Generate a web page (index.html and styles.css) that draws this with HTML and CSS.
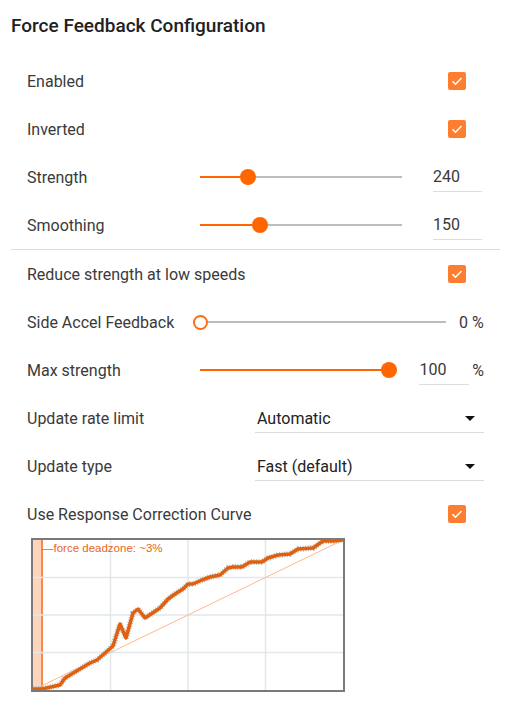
FILE: index.html
```html
<!DOCTYPE html>
<html lang="en">
<head>
  <meta charset="UTF-8" />
  <title>Force Feedback Configuration</title>
  <link rel="stylesheet" href="styles.css">
</head>
<body>
  <div class="panel">
    <h1>Force Feedback Configuration</h1>

    <div class="group">
      <div class="row">
        <span class="label">Enabled</span>
        <span class="check"><svg viewBox="0 0 18 18"><path d="M4.5 9.2l3 3 6-6.2" /></svg></span>
      </div>
      <div class="row">
        <span class="label">Inverted</span>
        <span class="check"><svg viewBox="0 0 18 18"><path d="M4.5 9.2l3 3 6-6.2" /></svg></span>
      </div>
      <div class="row">
        <span class="label fixed">Strength</span>
        <div class="slider s-strength">
          <div class="fill" style="width: 23.8%"></div>
          <div class="thumb" style="left: 23.8%"></div>
        </div>
        <span class="num n-strength">240</span>
      </div>
      <div class="row">
        <span class="label fixed">Smoothing</span>
        <div class="slider s-strength">
          <div class="fill" style="width: 29.7%"></div>
          <div class="thumb" style="left: 29.7%"></div>
        </div>
        <span class="num n-strength">150</span>
      </div>
    </div>

    <div class="group divided">
      <div class="row">
        <span class="label">Reduce strength at low speeds</span>
        <span class="check"><svg viewBox="0 0 18 18"><path d="M4.5 9.2l3 3 6-6.2" /></svg></span>
      </div>
      <div class="row">
        <span class="label fixed">Side Accel Feedback</span>
        <div class="slider s-accel">
          <div class="fill" style="width: 0%"></div>
          <div class="thumb empty" style="left: 0%"></div>
        </div>
        <span class="plain">0 %</span>
      </div>
      <div class="row">
        <span class="label fixed">Max strength</span>
        <div class="slider s-max">
          <div class="fill" style="width: 100%"></div>
          <div class="thumb" style="left: 100%"></div>
        </div>
        <span class="num n-max">100</span>
        <span class="unit">%</span>
      </div>
      <div class="row">
        <span class="label wide">Update rate limit</span>
        <div class="select">
          <span>Automatic</span>
          <span class="arrow"></span>
        </div>
      </div>
      <div class="row">
        <span class="label wide">Update type</span>
        <div class="select">
          <span>Fast (default)</span>
          <span class="arrow"></span>
        </div>
      </div>
      <div class="row">
        <span class="label">Use Response Correction Curve</span>
        <span class="check"><svg viewBox="0 0 18 18"><path d="M4.5 9.2l3 3 6-6.2" /></svg></span>
      </div>

      <!-- response curve -->
      <div class="chart">
        <svg viewBox="0 0 310 150" width="310" height="150">
          <rect x="0" y="0" width="10" height="150" fill="#fdd5bc" />
          <line x1="9" y1="0" x2="9" y2="150" stroke="#f58a4c" stroke-width="2" />
          <g stroke="#e1e7eb" stroke-width="1.5">
            <line x1="77.5" y1="0" x2="77.5" y2="150" />
            <line x1="155" y1="0" x2="155" y2="150" />
            <line x1="232.5" y1="0" x2="232.5" y2="150" />
            <line x1="0" y1="37.5" x2="310" y2="37.5" />
            <line x1="0" y1="75" x2="310" y2="75" />
            <line x1="0" y1="112.5" x2="310" y2="112.5" />
          </g>
          <line x1="0" y1="150" x2="310" y2="0" stroke="#ffb88c" stroke-width="1" />
          <text x="9" y="11.5" class="dz">—force deadzone: ~3%</text>
          <polyline class="pts" points="0,149 9,149 27,145 32,138 47,129 57,123 64,120 80,106 87,84 93,98 100,73 105,69 112,78 127,68 135,59 142,54 150,49 155,44 160,44 169,40 177,37 187,35 195,28 200,27 209,27 217,22 229,22 235,18 245,15 257,14 265,9 280,8 290,1 300,1 310,0" />
          <polyline class="curve" points="0,149 9,149 27,145 32,138 47,129 57,123 64,120 80,106 87,84 93,98 100,73 105,69 112,78 127,68 135,59 142,54 150,49 155,44 160,44 169,40 177,37 187,35 195,28 200,27 209,27 217,22 229,22 235,18 245,15 257,14 265,9 280,8 290,1 300,1 310,0" />
        </svg>
      </div>
    </div>
  </div>
</body>
</html>
```

FILE: styles.css
```css
* {
  margin: 0;
  padding: 0;
  box-sizing: border-box;
}

body {
  background: #ffffff;
  font-family: Roboto, 'Liberation Sans', sans-serif;
  color: #333333;
}

.panel {
  width: 489px;
  margin-left: 11px;
}

h1 {
  font-size: 19px;
  font-weight: 500;
  color: #212121;
  line-height: 24px;
  padding: 14px 0 19px;
}

.divided {
  border-top: 1px solid #dddddd;
}

.row {
  display: flex;
  align-items: center;
  height: 48px;
  padding: 0 16px;
  font-size: 16px;
}

.label {
  flex: 1;
  color: #3a3a3a;
}

.label.fixed {
  flex: none;
  width: 173px;
}

.label.wide {
  flex: none;
  width: 228px;
}

/* checkbox */
.check {
  width: 18px;
  height: 18px;
  border-radius: 2px;
  background: #fd7e2f;
  margin-right: 18px;
  display: flex;
}

.check svg {
  width: 18px;
  height: 18px;
  fill: none;
  stroke: #ffffff;
  stroke-width: 1.6;
}

/* sliders */
.slider {
  position: relative;
  height: 2px;
  background: #bdbdbd;
}

.s-strength { width: 202px; }
.s-accel { width: 246px; }
.s-max { width: 190px; }

.fill {
  height: 2px;
  background: #ff6600;
}

.thumb {
  position: absolute;
  top: -7px;
  width: 16px;
  height: 16px;
  margin-left: -8px;
  border-radius: 50%;
  background: #ff6600;
}

.thumb.empty {
  top: -6.5px;
  width: 15px;
  height: 15px;
  margin-left: -7.5px;
  background: #ffffff;
  border: 2px solid #ff6d12;
}

.num {
  width: 49px;
  height: 28px;
  line-height: 26px;
  margin-top: 2px;
  border-bottom: 1px solid #dddddd;
  color: #3a3a3a;
}

.n-strength { margin-left: 31px; }

.n-max {
  width: 50px;
  margin-left: 30px;
}

.unit {
  margin-left: 3px;
  color: #3a3a3a;
}

.plain {
  margin-left: 13px;
  color: #3a3a3a;
}

/* dropdowns */
.select {
  width: 229px;
  height: 28px;
  margin-top: 2px;
  display: flex;
  align-items: center;
  justify-content: space-between;
  padding-left: 2px;
  padding-right: 9px;
  border-bottom: 1px solid #dddddd;
  color: #222222;
}

.arrow {
  width: 0;
  height: 0;
  border-left: 5px solid transparent;
  border-right: 5px solid transparent;
  border-top: 5px solid #111111;
}

/* chart */
.chart {
  width: 314px;
  height: 154px;
  margin-left: 20px;
  border: 2px solid #7a7a7a;
}

.chart svg {
  display: block;
}

.dz {
  font-family: 'Liberation Sans', Arial, sans-serif;
  font-size: 11.5px;
  fill: #e8651a;
}

.pts {
  fill: none;
  stroke: #b8b8b8;
  stroke-width: 6;
  stroke-dasharray: 1 1.5;
  stroke-linejoin: round;
}

.curve {
  fill: none;
  stroke: #e0600e;
  stroke-width: 3.5;
  stroke-linejoin: round;
}
```
